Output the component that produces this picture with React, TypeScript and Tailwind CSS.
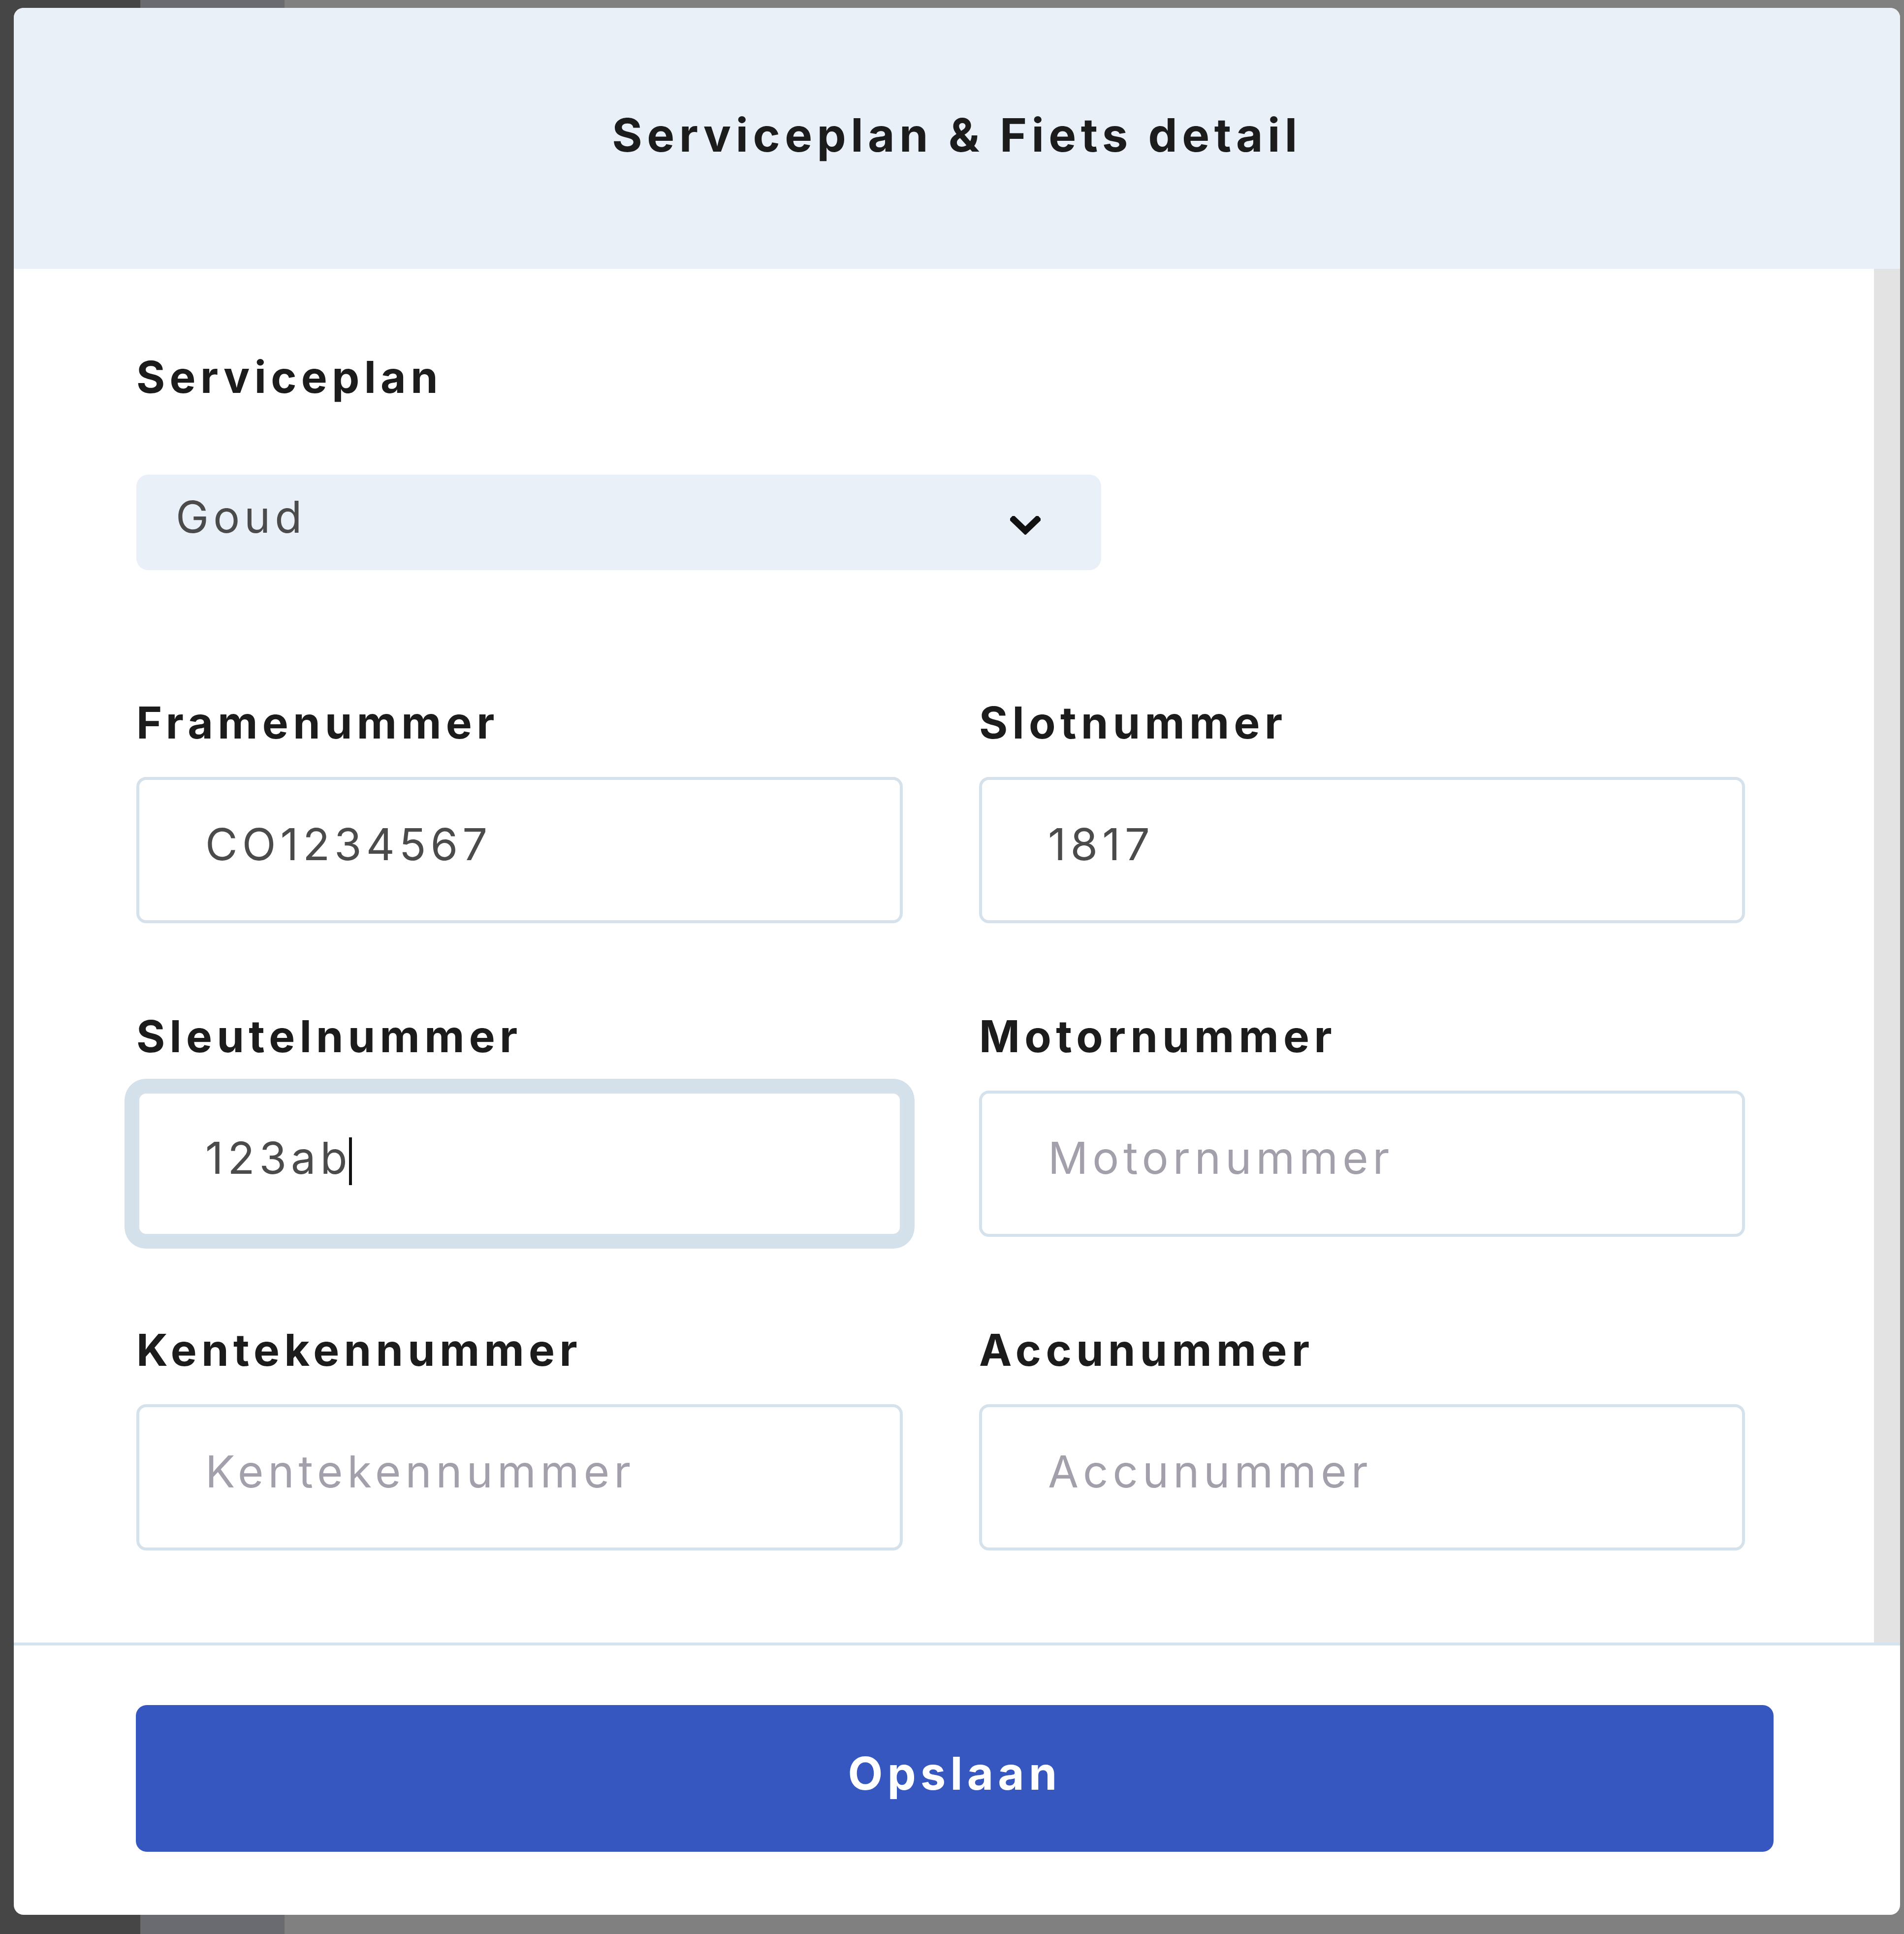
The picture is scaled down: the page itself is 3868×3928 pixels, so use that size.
import React from "react";

function Label({ children }: { children: React.ReactNode }) {
  return (
    <div className="text-[89px] leading-[106px] font-bold tracking-[0.105em] text-[#1c1c1c] whitespace-nowrap">
      {children}
    </div>
  );
}

function Field({
  label,
  value,
  placeholder,
  focused,
}: {
  label: string;
  value?: string;
  placeholder?: string;
  focused?: boolean;
}) {
  return (
    <div className="flex flex-col">
      <Label>{label}</Label>
      <div
        className={
          focused
            ? "mt-[57px] h-[297px] border-[6px] border-[#d5e2ec] rounded-[20px] bg-white flex items-center pl-[134px] shadow-[0_0_0_24px_#d4e1eb]"
            : "mt-[57px] h-[297px] border-[6px] border-[#d5e2ec] rounded-[20px] bg-white flex items-center pl-[134px]"
        }
      >
        <div className="mb-[23px] flex items-center text-[90px] leading-[108px] tracking-[0.1em] whitespace-nowrap">
          {value ? (
            <span className="text-[#4b4b4b]">{value}</span>
          ) : (
            <span className="text-[#a39fab]">{placeholder}</span>
          )}
          {focused && (
            <span className="-ml-[6px] mt-[13px] w-[6px] h-[97px] bg-[#111111] inline-block" />
          )}
        </div>
      </div>
    </div>
  );
}

export default function App() {
  return (
    <div className="w-[3868px] h-[3928px] pt-[16px] pl-[28px] pr-[8px] pb-[39px] bg-[linear-gradient(to_right,#464646_0px,#464646_285px,#696b70_285px,#696b70_578px,#808080_578px)] [font-family:Inter,'Noto_Sans',sans-serif]">
      <div className="w-full h-full bg-white rounded-[20px] overflow-hidden flex flex-col">
        <div className="h-[530px] shrink-0 bg-[#e9f0f8] flex items-center justify-center pb-[14px]">
          <h1 className="text-[94px] leading-[114px] font-bold tracking-[0.1em] text-[#1c1c1c]">
            Serviceplan &amp; Fiets detail
          </h1>
        </div>

        <div className="h-[2790px] shrink-0 flex">
          <div className="flex-1 pl-[249px] pr-[262px] pt-[167px]">
            <Label>Serviceplan</Label>
            <div className="mt-[145px] w-[1960px] h-[194px] rounded-[24px] bg-[#e9f0f8] flex items-center justify-between pl-[80px] pr-[123px]">
              <span className="mb-[22px] text-[90px] leading-[108px] tracking-[0.1em] text-[#4b4b4b]">
                Goud
              </span>
              <svg
                className="mt-[11px]"
                width="62"
                height="38"
                viewBox="0 0 62 38"
                fill="none"
              >
                <polyline
                  points="7,7 31,30 55,7"
                  stroke="#111111"
                  strokeWidth="13"
                  strokeLinecap="square"
                  strokeLinejoin="miter"
                />
              </svg>
            </div>

            <div className="mt-[257px] grid grid-cols-[1557px_1556px] gap-x-[155px] gap-y-[177px]">
              <Field label="Framenummer" value="CO1234567" />
              <Field label="Slotnummer" value="1817" />
              <Field label="Sleutelnummer" value="123ab" focused />
              <Field label="Motornummer" placeholder="Motornummer" />
              <Field label="Kentekennummer" placeholder="Kentekennummer" />
              <Field label="Accunummer" placeholder="Accunummer" />
            </div>
          </div>
          <div className="w-[53px] shrink-0 bg-[#e3e3e3]" />
        </div>

        <div className="h-[6px] shrink-0 bg-[#d5e3ec]" />

        <div className="flex-1 pt-[121px] pl-[248px] pr-[257px]">
          <button className="w-full h-[298px] rounded-[22px] bg-[#3656c0] flex items-center justify-center">
            <span className="mb-[21px] text-[92px] leading-[110px] font-bold tracking-[0.1em] text-white">
              Opslaan
            </span>
          </button>
        </div>
      </div>
    </div>
  );
}
